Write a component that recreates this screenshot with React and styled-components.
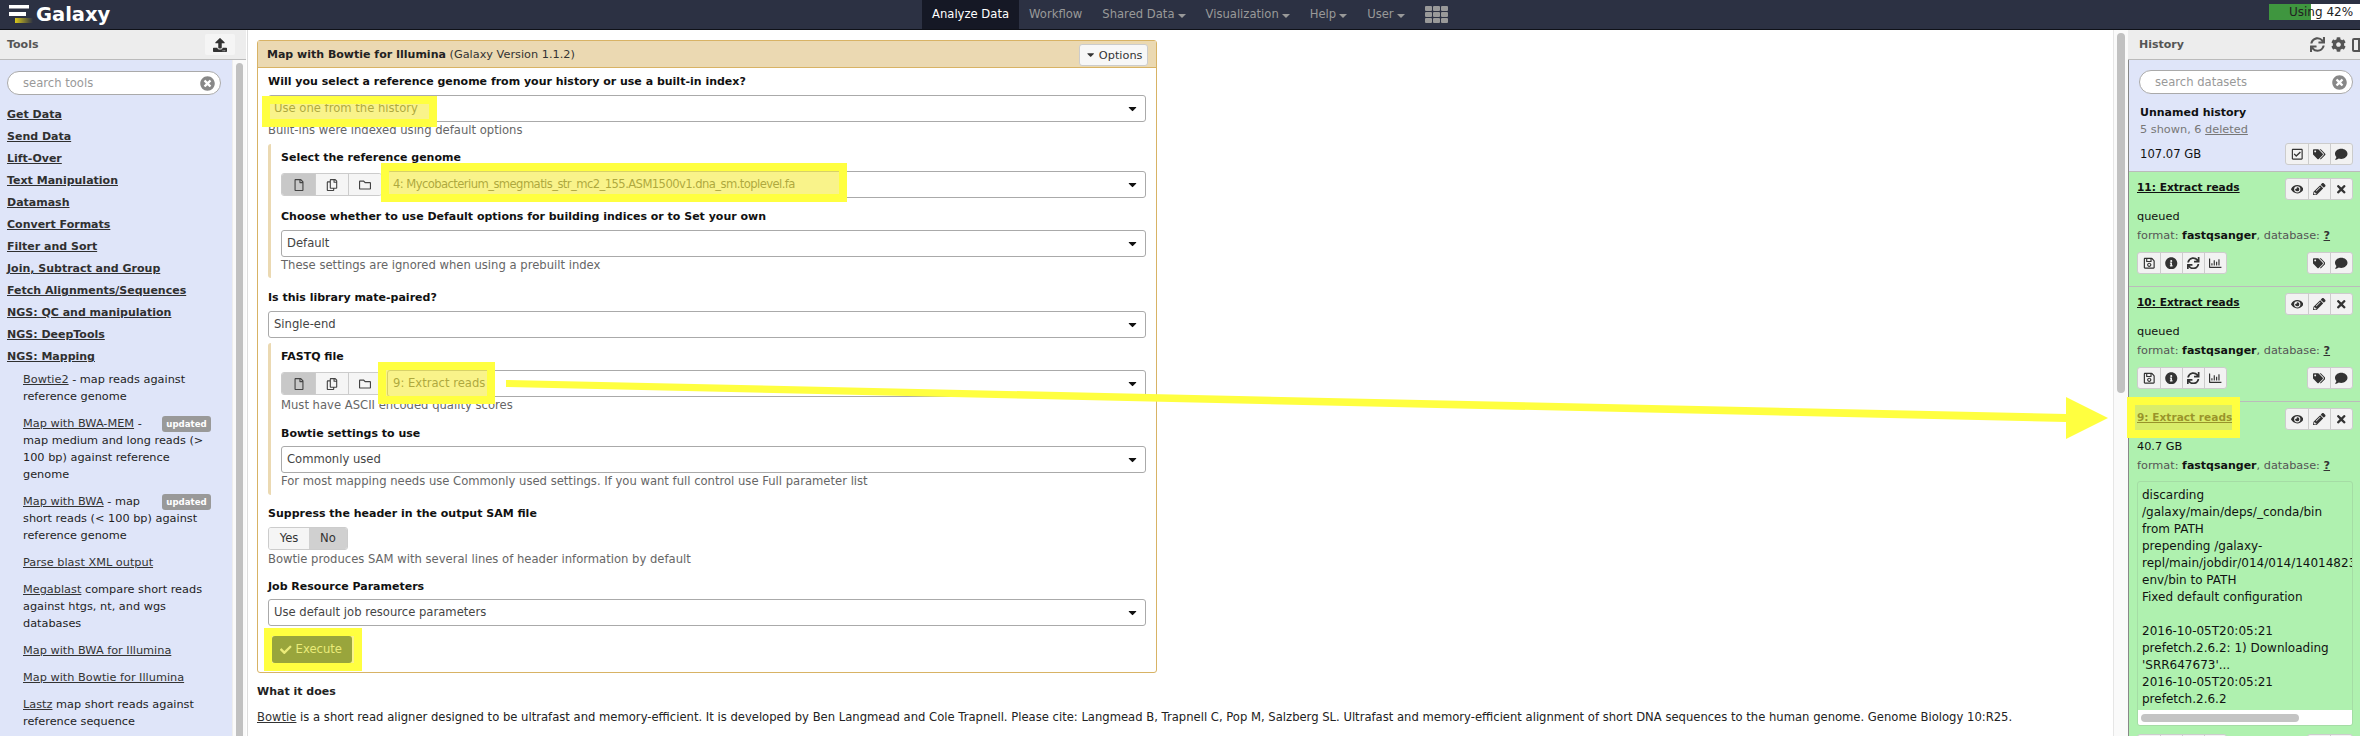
import React from 'react';
import styled, { createGlobalStyle } from 'styled-components';
import { FaRegFile, FaRegCopy, FaRegFolder, FaEye, FaPencilAlt, FaTimes, FaTags, FaComment, FaRegCheckSquare, FaRegSave, FaInfoCircle, FaSync, FaCog, FaRegChartBar, FaCheck, FaUpload, FaCaretDown, FaTimesCircle } from 'react-icons/fa';

const Global = createGlobalStyle`
  html, body { margin: 0; padding: 0; background: #fff; overflow: hidden; }
  * { box-sizing: border-box; }
  body { font-family: "DejaVu Sans", sans-serif; font-size: 11.3px; line-height: 17px; color: #222; }
`;
const Page = styled.div`position: relative; width: 2360px; height: 736px; overflow: hidden; display: flex; flex-direction: column;`;
const Masthead = styled.header`height: 30px; flex: none; background: #2c3143; border-bottom: 1px solid #0f1118; display: flex; align-items: stretch;`;
const Brand = styled.div`width: 922px; flex: none; display: flex; align-items: center; padding-left: 9px; gap: 2px; color: #fff; font-size: 19.5px; font-weight: 700;`;
const NavItem = styled.div`display: flex; align-items: center; gap: 3px; padding: 0 10px; color: ${p => p.$active ? '#fff' : '#999'}; background: ${p => p.$active ? '#151825' : 'transparent'}; font-size: 11.6px;`;
const NavCaret = styled.span`width: 0; height: 0; border-left: 4px solid transparent; border-right: 4px solid transparent; border-top: 4px solid #999; margin-top: 2px;`;
const Grid = styled.div`display: grid; grid-template-columns: repeat(3, 7px); grid-auto-rows: 5px; gap: 1px; align-self: center; margin-left: 10px;`;
const GridCell = styled.span`background: #999; border-radius: 1px;`;
const Quota = styled.div`margin-left: auto; margin-top: 4px; width: 91px; height: 16px; background: linear-gradient(90deg, #3f963f 46%, #fff 46%); color: #222; font-size: 12px; line-height: 17px; padding-left: 20px; white-space: nowrap;`;
const Columns = styled.div`flex: 1; min-height: 0; display: flex;`;
const Side = styled.aside`flex: none; width: ${p => p.$w}px; display: flex; flex-direction: column; height: 100%; overflow: hidden;`;
const SideHead = styled.div`height: 30px; flex: none; background: #ededed; border-bottom: 1px solid #bbb; display: flex; align-items: center; justify-content: space-between; padding-left: ${p => p.$pad}px; color: #555; font-weight: 700; font-size: 11px;`;
const UploadBtn = styled.div`width: 30px; height: 21px; margin-right: 11px; background: #f5f5f5; border-radius: 2px; display: flex; align-items: center; justify-content: center; color: #333; font-size: 14px;`;
const HeadIcons = styled.div`display: flex; align-items: center; gap: 6px; color: #555; font-size: 15px; margin-right: -5px;`;
const ColIcon = styled.span`width: 14px; height: 14px; border: 2px solid #555; border-radius: 2px; display: flex; justify-content: center; &::after { content: ""; width: 2px; background: #555; }`;
const ToolBody = styled.div`flex: 1; min-height: 0; display: flex;`;
const ToolList = styled.div`flex: 1; background: #dfe5f9; padding: 11px 7px 0; overflow: hidden;`;
const Track = styled.div`flex: none; width: 14px; background: #fafafa; padding: 3px 3px 0; border-left: 1px solid #eee;`;
const Thumb = styled.div`height: ${p => p.$h}px; background: #c1c1c1; border-radius: 4px;`;
const Search = styled.div`height: 24px; width: 214px; background: #fff; border: 1px solid #aaa; border-radius: 12px; display: flex; align-items: center; justify-content: space-between; padding: 0 5px 0 15px; color: #999; font-size: 11.6px;`;
const ClearIcon = styled(FaTimesCircle)`color: #888; font-size: 15px;`;
const Sections = styled.div`margin-top: 11px; display: flex; flex-direction: column; gap: 5px;`;
const Section = styled.a`color: #303030; font-weight: 700; font-size: 11px; text-decoration: underline;`;
const Tools = styled.div`margin: 6px 0 0 16px; width: 190px; display: flex; flex-direction: column; gap: 10px;`;
const Tool = styled.div`color: #1e1e1e; `;
const ToolLink = styled.a`color: #333; text-decoration: underline;`;
const Badge = styled.span`float: right; margin-top: 1px; margin-right: 2px; margin-left: 2px; width: 49px; height: 16px; line-height: 16px; text-align: center; background: #999; color: #fff; font-size: 8.6px; font-weight: 700; border-radius: 3px;`;
const Center = styled.main`flex: none; width: 1866px; margin-left: 1px; border-left: 1px solid #ddd; padding: 10px 0 0 9px; overflow: hidden; font-size: 11.6px;`;
const Panel = styled.section`width: 900px; height: 633px; border: 1px solid #d8b365; border-radius: 3px;`;
const PanelHead = styled.div`height: 27px; background: #ebd9b2; border-bottom: 1px solid #d8b365; display: flex; align-items: center; justify-content: space-between; padding: 0 8px 0 9px; color: #333; font-size: 11.3px;`;
const PanelTitle = styled.b`font-weight: 700; font-size: 11px; color: #222;`;
const OptionsBtn = styled.div`height: 22px; width: 69px; margin-top: 2px; background: #f7f7f7; border: 1px solid #ccc; border-radius: 3px; display: flex; align-items: center; justify-content: center; gap: 3px; color: #333;`;
const PanelBody = styled.div`padding: 5px 10px 0 10px;`;
const Label = styled.div`font-weight: 700; font-size: 11px; height: 17px; color: #111; margin-top: ${p => p.$mt || 0}px;`;
const SelectBox = styled.div`flex: 1; height: 27px; border: 1px solid #aaa; border-radius: 3px; display: flex; align-items: center; justify-content: space-between; padding: 0 6px 0 5px; color: #444; margin-top: ${p => p.$mt || 0}px;`;
const SelectText = styled.span`letter-spacing: ${p => p.$tight ? '-0.58px' : '0'};`;
const Caret = styled(FaCaretDown)`color: #111; font-size: 13px;`;
const Help = styled.div`height: 17px; color: #666;`;
const Nest = styled.div`margin-top: ${p => p.$mt}px; border-left: 3px solid #ebd9b2; border-radius: 3px; padding: 5px 0 ${p => p.$pb}px 10px;`;
const DataRow = styled.div`display: flex; align-items: center; gap: 5px; margin-top: 5px;`;
const BtnGroup = styled.div`display: flex; height: 23px; border: 1px solid #ccc; border-radius: 3px; overflow: hidden;`;
const GroupBtn = styled.div`width: 33px; background: ${p => p.$on ? '#c8c8c8' : '#f5f5f5'}; border-left: ${p => p.$first ? 'none' : '1px solid #ccc'}; display: flex; align-items: center; justify-content: center; color: #444; font-size: 12px;`;
const Toggle = styled.div`display: flex; width: 80px; height: 23px; margin: 5px 0 1px; border: 1px solid #ccc; border-radius: 3px; overflow: hidden;`;
const ToggleBtn = styled.div`flex: ${p => p.$w}; display: flex; align-items: center; justify-content: center; background: ${p => p.$on ? '#d0d0d0' : '#f5f5f5'}; color: #333;`;
const Execute = styled.div`width: 80px; height: 27px; margin: 10px 0 0 4px; background: #113c3c; border-radius: 3px; display: flex; align-items: center; gap: 4px; padding-left: 8px; color: #dcebd2;`;
const WhatTitle = styled.div`font-weight: 700; font-size: 11px; margin-top: 10px;`;
const Para = styled.div`margin-top: 9px; white-space: nowrap;`;
const CenterLink = styled.a`color: #333; text-decoration: underline;`;
const ScrollCol = styled.div`flex: none; width: 15px; background: #fafafa; border-left: 1px solid #e6e6e6; padding: 3px 3px 0;`;
const HistBody = styled.div`flex: 1; min-height: 0; border-left: 1px solid #888; overflow: hidden;`;
const HistTop = styled.div`height: 112px; background: #dfe5f9; border-bottom: 1px solid #bbb; padding: 10px 8px 0 10px;`;
const HistName = styled.div`margin: 10px 0 0 1px; font-weight: 700; font-size: 11px; color: #111;`;
const HistSub = styled.div`margin-left: 1px; color: #777;`;
const HistSize = styled.div`display: flex; align-items: center; justify-content: space-between; margin: 5px 0 0 1px; font-size: 11.6px; color: #111;`;
const Icons = styled.div`display: flex; height: 22px; background: #f2f2f2; border: 1px solid #ccc; border-radius: 3px; overflow: hidden;`;
const IconBtn = styled.div`width: 22px; display: flex; align-items: center; justify-content: center; color: #333; font-size: 12.5px; & + & { border-left: 1px solid #ccc; }`;
const Item = styled.article`height: ${p => p.$h}px; background: #aff1af; border-bottom: 1px solid #bbb; padding: 6px 8px 0 8px;`;
const ItemHead = styled.div`display: flex; justify-content: space-between; align-items: flex-start;`;
const ItemTitle = styled.a`font-weight: 700; font-size: 10.6px; color: #111; text-decoration: underline; margin-top: 1px;`;
const State = styled.div`margin-top: 8px; color: #111;`;
const Meta = styled.div`margin-top: 2px; color: #555;`;
const Strong = styled.b`font-size: 11px; color: #111;`;
const Under = styled.span`font-weight: 700; color: #333; text-decoration: underline;`;
const ItemActions = styled.div`display: flex; justify-content: space-between; margin-top: 8px;`;
const Peek = styled.div`border: 1px solid #a5dca5; border-radius: 3px; margin-top: 7px; width: 216px; height: 245px; display: flex; flex-direction: column; overflow: hidden; `;
const PeekText = styled.pre`flex: 1; margin: 0; padding: 5px 0 0 4px; font: inherit; font-size: 12px; color: #111; overflow: hidden; white-space: pre;`;
const HBar = styled.div`height: 15px; background: #fff; padding: 4px 0 0 3px;`;
const HThumb = styled.div`width: 158px; height: 8px; background: #c4c4c4; border-radius: 4px;`;
const Highlight = styled.div`position: absolute; left: ${p => p.$x}px; top: ${p => p.$y}px; width: ${p => p.$w}px; height: ${p => p.$h}px; border: 8px solid #ffff40; background: rgba(245, 235, 60, .6); pointer-events: none;`;
const Arrow = styled.svg`position: absolute; left: 0; top: 0; pointer-events: none;`;

const SECTIONS = ['Get Data','Send Data','Lift-Over','Text Manipulation','Datamash','Convert Formats','Filter and Sort','Join, Subtract and Group','Fetch Alignments/Sequences','NGS: QC and manipulation','NGS: DeepTools','NGS: Mapping'];
const TOOLS = [
  ['Bowtie2',' - map reads against reference genome'],
  ['Map with BWA-MEM',' - map medium and long reads (> 100 bp) against reference genome',true],
  ['Map with BWA',' - map short reads (< 100 bp) against reference genome',true],
  ['Parse blast XML output',''],
  ['Megablast',' compare short reads against htgs, nt, and wgs databases'],
  ['Map with BWA for Illumina',''],
  ['Map with Bowtie for Illumina',''],
  ['Lastz',' map short reads against reference sequence'],
];
const PEEK = `discarding
/galaxy/main/deps/_conda/bin
from PATH
prepending /galaxy-
repl/main/jobdir/014/014/140148239
env/bin to PATH
Fixed default configuration

2016-10-05T20:05:21
prefetch.2.6.2: 1) Downloading
'SRR647673'...
2016-10-05T20:05:21
prefetch.2.6.2`;

const Select = ({ children, mt, tight }) => <SelectBox $mt={mt}><SelectText $tight={tight}>{children}</SelectText><Caret /></SelectBox>;
const DataGroup = () => (
  <BtnGroup>
    <GroupBtn $first $on><FaRegFile /></GroupBtn>
    <GroupBtn><FaRegCopy /></GroupBtn>
    <GroupBtn><FaRegFolder /></GroupBtn>
  </BtnGroup>
);
const ItemButtons = () => <Icons><IconBtn><FaEye /></IconBtn><IconBtn><FaPencilAlt /></IconBtn><IconBtn><FaTimes /></IconBtn></Icons>;
const Format = () => <Meta>format: <Strong>fastqsanger</Strong>, database: <Under>?</Under></Meta>;
const Actions = () => (
  <ItemActions>
    <Icons><IconBtn><FaRegSave /></IconBtn><IconBtn><FaInfoCircle /></IconBtn><IconBtn><FaSync /></IconBtn><IconBtn><FaRegChartBar /></IconBtn></Icons>
    <Icons><IconBtn><FaTags /></IconBtn><IconBtn><FaComment /></IconBtn></Icons>
  </ItemActions>
);

export default function App() {
  return (
    <Page>
      <Global />
      <Masthead>
        <Brand>
          <svg width="25" height="20" viewBox="0 0 25 20">
            <defs><linearGradient id="lg" x1="0" x2="1"><stop offset="0" stopColor="#d8c71c" /><stop offset="1" stopColor="#2c3143" /></linearGradient></defs>
            <rect x="0" y="0" width="20" height="3.5" fill="#fff" />
            <rect x="0" y="7" width="17" height="4" fill="#fff" />
            <rect x="6" y="13" width="18" height="5" fill="url(#lg)" />
          </svg>
          Galaxy
        </Brand>
        <NavItem $active>Analyze Data</NavItem>
        <NavItem>Workflow</NavItem>
        <NavItem>Shared Data<NavCaret /></NavItem>
        <NavItem>Visualization<NavCaret /></NavItem>
        <NavItem>Help<NavCaret /></NavItem>
        <NavItem>User<NavCaret /></NavItem>
        <Grid>{Array.from({ length: 9 }, (_, i) => <GridCell key={i} />)}</Grid>
        <Quota>Using 42%</Quota>
      </Masthead>
      <Columns>
        <Side $w={246}>
          <SideHead $pad={7}>Tools<UploadBtn><FaUpload /></UploadBtn></SideHead>
          <ToolBody>
            <ToolList>
              <Search>search tools<ClearIcon /></Search>
              <Sections>{SECTIONS.map(s => <div key={s}><Section>{s}</Section></div>)}</Sections>
              <Tools>
                {TOOLS.map(([n, d, u]) => (
                  <Tool key={n}>{u && <Badge>updated</Badge>}<ToolLink>{n}</ToolLink>{d}</Tool>
                ))}
              </Tools>
            </ToolList>
            <Track><Thumb $h={680} /></Track>
          </ToolBody>
        </Side>
        <Center>
          <Panel>
            <PanelHead>
              <span><PanelTitle>Map with Bowtie for Illumina</PanelTitle> (Galaxy Version 1.1.2)</span>
              <OptionsBtn><FaCaretDown />Options</OptionsBtn>
            </PanelHead>
            <PanelBody>
              <Label>Will you select a reference genome from your history or use a built-in index?</Label>
              <Select mt={5}>Use one from the history</Select>
              <Help>Built-ins were indexed using default options</Help>
              <Nest $mt={5} $pb={4}>
                <Label>Select the reference genome</Label>
                <DataRow><DataGroup /><Select tight>4: Mycobacterium_smegmatis_str_mc2_155.ASM1500v1.dna_sm.toplevel.fa</Select></DataRow>
                <Label $mt={10}>Choose whether to use Default options for building indices or to Set your own</Label>
                <Select mt={5}>Default</Select>
                <Help>These settings are ignored when using a prebuilt index</Help>
              </Nest>
              <Label $mt={11}>Is this library mate-paired?</Label>
              <Select mt={5}>Single-end</Select>
              <Nest $mt={5} $pb={5}>
                <Label>FASTQ file</Label>
                <DataRow><DataGroup /><Select>9: Extract reads</Select></DataRow>
                <Help>Must have ASCII encoded quality scores</Help>
                <Label $mt={11}>Bowtie settings to use</Label>
                <Select mt={4}>Commonly used</Select>
                <Help>For most mapping needs use Commonly used settings. If you want full control use Full parameter list</Help>
              </Nest>
              <Label $mt={10}>Suppress the header in the output SAM file</Label>
              <Toggle><ToggleBtn $w={41}>Yes</ToggleBtn><ToggleBtn $w={39} $on>No</ToggleBtn></Toggle>
              <Help>Bowtie produces SAM with several lines of header information by default</Help>
              <Label $mt={10}>Job Resource Parameters</Label>
              <Select mt={4}>Use default job resource parameters</Select>
              <Execute><FaCheck />Execute</Execute>
            </PanelBody>
          </Panel>
          <WhatTitle>What it does</WhatTitle>
          <Para><CenterLink>Bowtie</CenterLink> is a short read aligner designed to be ultrafast and memory-efficient. It is developed by Ben Langmead and Cole Trapnell. Please cite: Langmead B, Trapnell C, Pop M, Salzberg SL. Ultrafast and memory-efficient alignment of short DNA sequences to the human genome. Genome Biology 10:R25.</Para>
        </Center>
        <ScrollCol><Thumb $h={360} /></ScrollCol>
        <Side $w={233}>
          <SideHead $pad={11}>History<HeadIcons><FaSync /><FaCog /><ColIcon /></HeadIcons></SideHead>
          <HistBody>
            <HistTop>
              <Search>search datasets<ClearIcon /></Search>
              <HistName>Unnamed history</HistName>
              <HistSub>5 shown, 6 <u>deleted</u></HistSub>
              <HistSize>107.07 GB<Icons><IconBtn><FaRegCheckSquare /></IconBtn><IconBtn><FaTags /></IconBtn><IconBtn><FaComment /></IconBtn></Icons></HistSize>
            </HistTop>
            <Item $h={115}>
              <ItemHead><ItemTitle>11: Extract reads</ItemTitle><ItemButtons /></ItemHead>
              <State>queued</State><Format /><Actions />
            </Item>
            <Item $h={115}>
              <ItemHead><ItemTitle>10: Extract reads</ItemTitle><ItemButtons /></ItemHead>
              <State>queued</State><Format /><Actions />
            </Item>
            <Item $h={340}>
              <ItemHead><ItemTitle>9: Extract reads</ItemTitle><ItemButtons /></ItemHead>
              <State>40.7 GB</State><Format />
              <Peek><PeekText>{PEEK}</PeekText><HBar><HThumb /></HBar></Peek>
              <Actions />
            </Item>
          </HistBody>
        </Side>
      </Columns>
      <Highlight $x={262} $y={96} $w={175} $h={31} />
      <Highlight $x={381} $y={163} $w={466} $h={39} />
      <Highlight $x={378} $y={362} $w={117} $h={42} />
      <Highlight $x={264} $y={628} $w={98} $h={43} />
      <Highlight $x={2127} $y={397} $w={113} $h={41} />
      <Arrow width="2360" height="736" viewBox="0 0 2360 736">
        <polygon fill="#ffff40" points="506,380 2066,414 2066,397 2108,418 2066,439 2066,422 506,387" />
      </Arrow>
    </Page>
  );
}
